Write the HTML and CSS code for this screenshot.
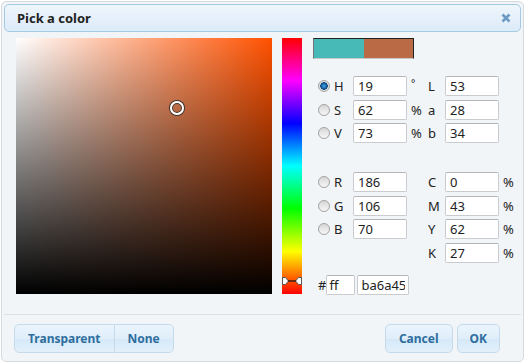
FILE: index.html
```html
<!DOCTYPE html>
<html lang="en">
<head>
    <meta charset="utf-8" />
    <title>Pick a color</title>
    <link rel="stylesheet" href="styles.css">
</head>
<body>
    <div class="dialog">
        <div class="titlebar">
            <span class="title">Pick a color</span>
            <span class="close">
                <svg width="10" height="10" viewBox="0 0 10 10">
                    <path d="M1.5 1.5 L8.5 8.5 M8.5 1.5 L1.5 8.5" stroke="#6b9bc4" stroke-width="2.6" />
                </svg>
            </span>
        </div>

        <div class="content">
            <div class="map">
                <span class="cursor"></span>
            </div>
            <div class="bar">
                <svg class="bar-handle" width="20" height="8" viewBox="0 0 20 8">
                    <path d="M0.5 0.5 H3.5 L6.5 4 L3.5 7.5 H0.5 Z" fill="#fff" stroke="#555" stroke-width="1" />
                    <path d="M19.5 0.5 H16.5 L13.5 4 L16.5 7.5 H19.5 Z" fill="#fff" stroke="#555" stroke-width="1" />
                    <path d="M6 4 H14" stroke="#111" stroke-width="1.2" />
                </svg>
            </div>

            <div class="panel">
                <div class="preview">
                    <span class="prev-old"></span>
                    <span class="prev-new"></span>
                </div>

                <div class="fields">
                    <label class="pick"><input type="radio" name="mode" checked> H</label>
                    <input class="num" type="text" value="19">
                    <span class="unit deg">°</span>
                    <span class="name">L</span>
                    <input class="num" type="text" value="53">
                    <span></span>

                    <label class="pick"><input type="radio" name="mode"> S</label>
                    <input class="num" type="text" value="62">
                    <span class="unit">%</span>
                    <span class="name">a</span>
                    <input class="num" type="text" value="28">
                    <span></span>

                    <label class="pick"><input type="radio" name="mode"> V</label>
                    <input class="num" type="text" value="73">
                    <span class="unit">%</span>
                    <span class="name">b</span>
                    <input class="num" type="text" value="34">
                    <span></span>

                    <span class="blank"></span>
                    <span></span><span></span><span></span><span></span><span></span>

                    <label class="pick"><input type="radio" name="mode"> R</label>
                    <input class="num" type="text" value="186">
                    <span></span>
                    <span class="name">C</span>
                    <input class="num" type="text" value="0">
                    <span class="unit">%</span>

                    <label class="pick"><input type="radio" name="mode"> G</label>
                    <input class="num" type="text" value="106">
                    <span></span>
                    <span class="name">M</span>
                    <input class="num" type="text" value="43">
                    <span class="unit">%</span>

                    <label class="pick"><input type="radio" name="mode"> B</label>
                    <input class="num" type="text" value="70">
                    <span></span>
                    <span class="name">Y</span>
                    <input class="num" type="text" value="62">
                    <span class="unit">%</span>

                    <span></span><span></span><span></span>
                    <span class="name">K</span>
                    <input class="num" type="text" value="27">
                    <span class="unit">%</span>
                </div>

                <div class="hex">
                    <span class="hash">#</span>
                    <input class="alpha" type="text" value="ff">
                    <input class="code" type="text" value="ba6a45">
                </div>
            </div>
        </div>

        <div class="buttonpane">
            <div class="buttonset">
                <button type="button" class="btn first">Transparent</button>
                <button type="button" class="btn last">None</button>
            </div>
            <div class="actions">
                <button type="button" class="btn">Cancel</button>
                <button type="button" class="btn ok">OK</button>
            </div>
        </div>
    </div>
</body>
</html>
```

FILE: styles.css
```css
body {
    margin: 0;
    background: #fff;
    font-family: "Noto Sans", "DejaVu Sans", sans-serif;
    color: #222;
}

.dialog {
    margin: 1px 0 0 1px;
    width: 523px;
    height: 361px;
    box-sizing: border-box;
    padding: 2px;
    border: 1px solid #d6dade;
    border-radius: 5px;
    background: #f1f5f8;
    display: flex;
    flex-direction: column;
}

.titlebar {
    height: 28px;
    box-sizing: border-box;
    border: 1px solid #a6c9e2;
    border-radius: 5px;
    background: linear-gradient(#eef5fc, #dcebf9);
    display: flex;
    align-items: center;
    justify-content: space-between;
    padding: 0 9px 0 12px;
}

.title {
    font-size: 13px;
    font-weight: bold;
    color: #222;
}

.close {
    display: flex;
    height: 10px;
}

.content {
    display: flex;
    align-items: flex-start;
    padding: 6px 0 0 12px;
    height: 282px;
    box-sizing: border-box;
}

.map {
    position: relative;
    width: 256px;
    height: 256px;
    margin-right: 10px;
    background:
        linear-gradient(to bottom, rgba(0, 0, 0, 0), #000),
        linear-gradient(to right, #fff, rgb(255, 81, 0));
}

.cursor {
    position: absolute;
    left: 154px;
    top: 63px;
    width: 10px;
    height: 10px;
    border: 2px solid #fff;
    border-radius: 50%;
    box-shadow: 0 0 0 1px #333, inset 0 0 0 1px #333;
}

.bar {
    position: relative;
    width: 20px;
    height: 256px;
    margin-right: 11px;
    background: linear-gradient(to bottom, #f00, #f0f, #00f, #0ff, #0f0, #ff0, #f00);
}

.bar-handle {
    position: absolute;
    left: 0;
    top: 239px;
}

.panel {
    width: 205px;
}

.preview {
    display: flex;
    width: 101px;
    height: 21px;
    box-sizing: border-box;
    border: 1px solid #222;
    border-left-color: #777;
    border-bottom-color: #c8c8c8;
}

.prev-old {
    flex: 1;
    background: #47b9b7;
}

.prev-new {
    flex: 1;
    background: #ba6a45;
}

.fields {
    display: grid;
    grid-template-columns: 40px 54px 18px 20px 54px 16px;
    grid-template-rows: 20px 20px 20px 22px 20px 20px 20px 20px;
    row-gap: 3.5px;
    margin-top: 17px;
    font-size: 13px;
}

.pick {
    display: flex;
    align-items: center;
    gap: 4px;
    padding-left: 5px;
}

.pick input {
    appearance: none;
    margin: 0;
    width: 12px;
    height: 12px;
    border: 1px solid #a3a3a3;
    border-radius: 50%;
    background: linear-gradient(#d6d6d6, #f7f7f7);
}

.pick input:checked {
    background: radial-gradient(circle, #4aa3e6 0, #1565a8 2.5px, #0b3f70 3.5px, #e4e4e4 4px, #cfcfcf 100%);
}

.num, .alpha, .code {
    box-sizing: border-box;
    height: 20px;
    border: 1px solid #c9cbce;
    border-top-color: #b3b5b9;
    border-radius: 2px;
    background: #fff;
    font-family: inherit;
    font-size: 13px;
    color: #222;
    padding: 0 4px;
    margin: 0;
    outline: none;
}

.num {
    width: 54px;
}

.unit {
    padding-left: 4px;
    line-height: 20px;
}

.deg {
    font-size: 10px;
    line-height: 14px;
}

.name {
    padding-left: 3px;
    line-height: 20px;
}

.hex {
    display: flex;
    align-items: center;
    margin-top: 12.5px;
    padding-left: 5px;
    font-size: 13px;
}

.alpha {
    width: 29px;
    padding: 0 2px;
}

.code {
    width: 52px;
    margin-left: 2px;
    padding: 0 3px;
}

.buttonpane {
    display: flex;
    justify-content: space-between;
    border-top: 1px solid #dcdfe3;
    padding: 9px 21px 0 10px;
}

.buttonset, .actions {
    display: flex;
}

.actions {
    gap: 4px;
}

.btn {
    height: 29px;
    padding: 0 13px;
    border: 1px solid #c5dbec;
    border-radius: 5px;
    background: linear-gradient(#eaf4fd, #e0eefa 50%, #d5e8f8 51%, #e3f0fb);
    font-family: inherit;
    font-size: 12px;
    font-weight: bold;
    color: #2e6e9e;
}

.btn.ok {
    padding: 0 12px;
}

.buttonset .first {
    border-radius: 5px 0 0 5px;
}

.buttonset .last {
    border-left: none;
    border-radius: 0 5px 5px 0;
}
```
